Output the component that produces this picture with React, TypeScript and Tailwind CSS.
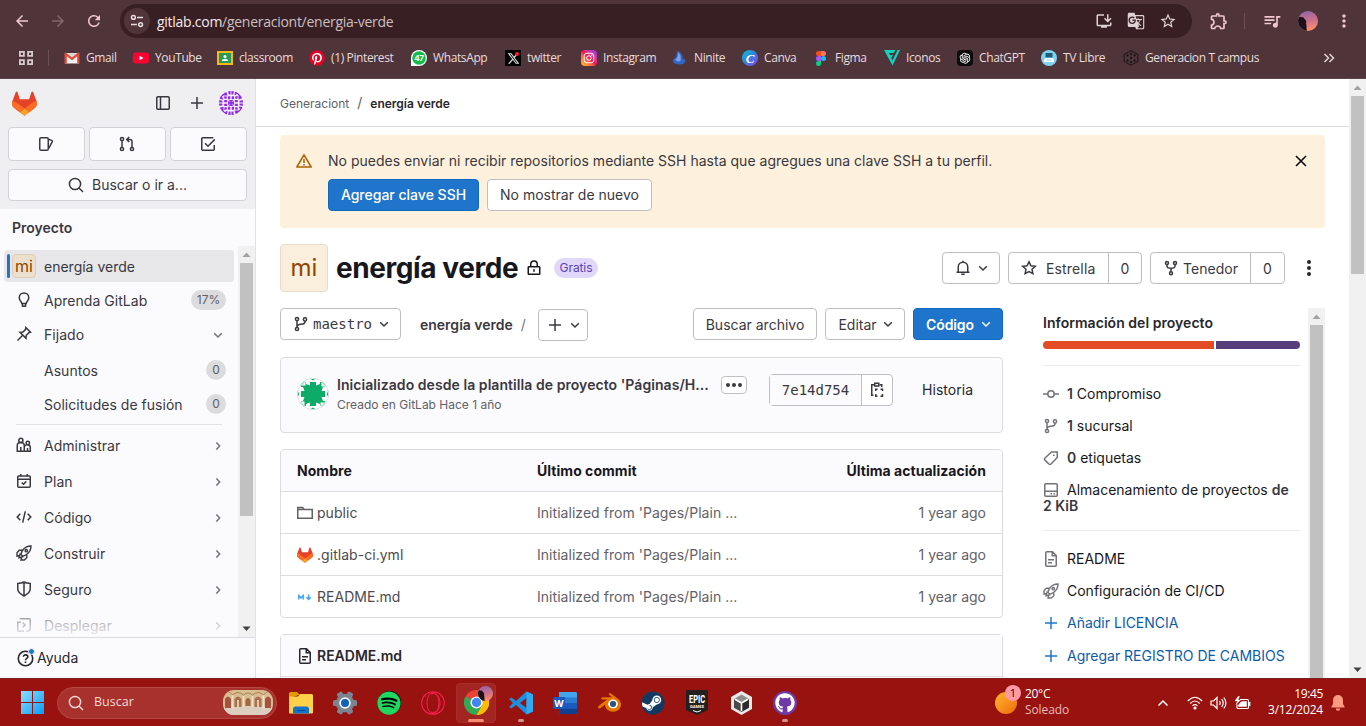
import React from "react";
import {
  MdArrowBack, MdArrowForward, MdRefresh, MdInstallDesktop, MdGTranslate, MdStarBorder,
  MdOutlineExtension, MdQueueMusic, MdMoreVert,
} from "react-icons/md";
import { FaPinterest, FaSpotify, FaSteam, FaGithub, FaXTwitter, FaInstagram } from "react-icons/fa6";
import { AiOutlineOpenAI } from "react-icons/ai";
import { SiBlender } from "react-icons/si";

type P = { className?: string };
type Kids = { children: React.ReactNode };

const I = ({ children, className = "", size = 16, w = 1.5 }: Kids & { className?: string; size?: number; w?: number }) => (
  <svg width={size} height={size} viewBox="0 0 16 16" fill="none" stroke="currentColor" strokeWidth={w} className={`shrink-0 ${className}`}>
    {children}
  </svg>
);

const Tanuki = ({ size = 16 }: { size?: number }) => (
  <svg width={size} height={size} viewBox="0 0 25 24" className="shrink-0">
    <path fill="#E24329" d="m24.507 9.5-.034-.09L21.082.562a.896.896 0 0 0-1.694.091l-2.29 7.01H7.825L5.535.653a.898.898 0 0 0-1.694-.09L.451 9.411.416 9.5a6.297 6.297 0 0 0 2.09 7.278l.012.01.03.022 5.16 3.867 2.56 1.935 1.554 1.176a1.051 1.051 0 0 0 1.268 0l1.555-1.176 2.56-1.935 5.197-3.89.014-.01A6.297 6.297 0 0 0 24.507 9.5Z" />
    <path fill="#FC6D26" d="m24.507 9.5-.034-.09a11.44 11.44 0 0 0-4.56 2.051l-7.447 5.632 4.742 3.584 5.197-3.89.014-.01A6.297 6.297 0 0 0 24.507 9.5Z" />
    <path fill="#FCA326" d="m7.707 20.677 2.56 1.935 1.555 1.176a1.051 1.051 0 0 0 1.268 0l1.555-1.176 2.56-1.935-4.743-3.584-4.755 3.584Z" />
    <path fill="#FC6D26" d="M5.01 11.461a11.43 11.43 0 0 0-4.56-2.05L.416 9.5a6.297 6.297 0 0 0 2.09 7.278l.012.01.03.022 5.16 3.867 4.745-3.584-7.444-5.632Z" />
  </svg>
);

const Chevron = ({ className = "" }: P) => <I className={className}><path d="m4.200 6.300 3.800 3.700 3.800-3.700" /></I>;
const ChevronRight = ({ className = "" }: P) => <I className={className}><path d="m6.300 4.400 3.400 3.600-3.400 3.600" /></I>;
const Plus = ({ className = "" }: P) => <I className={className}><path d="M8 2v12M2 8h12" /></I>;
const Branch = ({ className = "" }: P) => (
  <I className={className}><circle cx="4" cy="3" r="1.600" /><circle cx="4" cy="13" r="1.600" /><circle cx="12" cy="3.400" r="1.600" /><path d="M4 4.600v6.800M12 5v.6c0 1.600-1 2.300-2.400 2.500L6.400 8.600C5 8.900 4 9.600 4 11" /></I>
);
const Fork = ({ className = "" }: P) => (
  <I className={className}><circle cx="4" cy="3" r="1.500" /><circle cx="12" cy="3" r="1.500" /><circle cx="8" cy="13.200" r="1.500" /><path d="M4 4.500V6c0 1.500 1 2.300 4 2.300S12 7.500 12 6V4.500M8 8.200v3.500" /></I>
);
const Rocket = ({ className = "" }: P) => (
  <I className={className} w={1.400}>
    <path d="M15 1c-4 0-6.500 1.500-8.500 4.500-1.300 2-1.500 3-1.500 4l1.500 1.600c1.200 0 2.300-.4 4-1.600C13.500 7.500 15 5 15 1Z" /><circle cx="10.300" cy="5.700" r="1.200" />
    <path d="M6.200 5.200H3.300L1 7.800v3.400l3-.7M10.800 9.800v3L8.200 15H5l.8-3.200M4.300 8.200 3 12.800l4.500-1.200" />
  </I>
);
const Doc = ({ className = "" }: P) => (
  <I className={className}><path d="M2.750 1.750a1 1 0 0 1 1-1H9.500l3.750 3.750v9.750a1 1 0 0 1-1 1h-8.500a1 1 0 0 1-1-1ZM9.250 1v3.750H13M5 8.750h6M5 11.750h4" /></I>
);

const Arrow = ({ up, dim }: { up?: boolean; dim?: boolean }) => (
  <svg width="17" height="17" viewBox="0 0 17 17" className="shrink-0">
    <path d={up ? "M8.500 6.500 12.500 11h-8Z" : "M8.500 11 12.500 6.500h-8Z"} fill={dim ? "#a3a3a3" : "#404040"} />
  </svg>
);

/* ---------- browser ---------- */

const ico = "h-4 w-4 shrink-0";
const bookmarks: { w: string; label: string; icon: React.ReactNode }[] = [
  { w: "w-[69px]", label: "Gmail", icon: <svg viewBox="0 0 16 16" className={ico}><path d="M1 3h14v10.500H1z" fill="#f1f1f1" /><path d="M1 3.500 8 9l7-5.500V3H1z" fill="#d9d9d9" /><path d="M.5 13.500V3.500c0-1 1-1.300 1.800-.6L8 7.500l5.700-4.600c.8-.7 1.800-.4 1.800.6v10h-2.300V6.300L8 10.300 2.800 6.300v7.200z" fill="#dd4b39" /></svg> },
  { w: "w-[84px]", label: "YouTube", icon: <svg viewBox="0 0 16 16" className={ico}><rect y="2.500" width="16" height="11" rx="3" fill="#ff0033" /><path d="m6.500 5.700 4 2.300-4 2.300z" fill="#fff" /></svg> },
  { w: "w-[92px]", label: "classroom", icon: <svg viewBox="0 0 16 16" className={ico}><path d="M0 1h16v14H0z" fill="#f4b917" /><path d="M2 3h12v10H2z" fill="#279a57" /><circle cx="8" cy="6.500" r="1.500" fill="#fff" /><path d="M4.800 11c0-3 6.400-3 6.400 0z" fill="#fff" /></svg> },
  { w: "w-[102px]", label: "(1) Pinterest", icon: <span className="flex h-4 w-4 shrink-0 items-center justify-center"><span className="flex h-[14px] w-[14px] items-center justify-center rounded-full bg-white"><FaPinterest size={16} color="#e60023" className="shrink-0" /></span></span> },
  { w: "w-[94px]", label: "WhatsApp", icon: <svg viewBox="0 0 16 16" className={ico}><path d="M0 16V8A8 8 0 1 1 8 16z" fill="#fff" /><circle cx="8" cy="8" r="6.800" fill="#12bd4e" /><text x="8" y="10.900" fontSize="8" fontWeight="700" fontFamily="Inter, sans-serif" textAnchor="middle" fill="#fff">47</text></svg> },
  { w: "w-[76px]", label: "twitter", icon: <span className="relative flex h-4 w-4 shrink-0 items-center justify-center bg-black"><FaXTwitter size={13} color="#ddd" /><i className="absolute right-0.5 top-0.5 h-1 w-1 rounded-full bg-[#ff1a2c]" /></span> },
  { w: "w-[91px]", label: "Instagram", icon: <span className="flex h-4 w-4 shrink-0 items-center justify-center rounded-[4px] bg-linear-to-tr from-[#ffc800] via-[#f9094d] to-[#a011f5]"><FaInstagram size={12} color="#fff" /></span> },
  { w: "w-[70px]", label: "Ninite", icon: <svg viewBox="0 0 16 16" className={ico}><path d="M2 13c-2-2-1-4 1-5C5 7 4 5 5.500 1c4 1 5.500 4.500 5 8 1.500-1 4 1 2.500 3.500C11.500 15 4 15 2 13Z" fill="#3565c4" /><path d="M6 2.500c3 2 3 5 2.500 8.500C6 12 4 11 3 9.500 6 8.500 5.500 6 6 2.500Z" fill="#76a2ee" /></svg> },
  { w: "w-[71px]", label: "Canva", icon: <span className="flex h-4 w-4 shrink-0 items-center justify-center rounded-full bg-linear-to-br from-[#00c4cc] via-[#2f7fe0] to-[#7d2ae8] font-['Liberation_Serif'] text-[13px] font-bold italic leading-none text-white">C</span> },
  { w: "w-[71px]", label: "Figma", icon: <svg viewBox="0 0 16 16" className={ico}><path d="M8 1H5.500a2.500 2.500 0 0 0 0 5H8z" fill="#f24e1e" /><path d="M8 1h2.500a2.500 2.500 0 0 1 0 5H8z" fill="#ff7262" /><path d="M8 6H5.500a2.500 2.500 0 0 0 0 5H8z" fill="#a259ff" /><circle cx="10.500" cy="8.500" r="2.500" fill="#1abcfe" /><path d="M8 11H5.500A2.500 2.500 0 1 0 8 13.500z" fill="#0acf83" /></svg> },
  { w: "w-[73px]", label: "Iconos", icon: <svg viewBox="0 0 16 16" className={ico}><path d="M0 0h11.500L9.700 3H5l1 2h3L7.300 8 6.500 6.500l2 4L13.500 0H16L8.500 15.500z" fill="#11d3bc" /></svg> },
  { w: "w-[84px]", label: "ChatGPT", icon: <span className="flex h-4 w-4 shrink-0 items-center justify-center rounded-[4px] bg-[#0c0c0c]"><AiOutlineOpenAI size={14} color="#fff" /></span> },
  { w: "w-[82px]", label: "TV Libre", icon: <svg viewBox="0 0 16 16" className={ico}><circle cx="8" cy="8" r="8" fill="#7fd3ee" /><path d="M4.500 3h7v4.500h-7z" fill="#1d5f78" /><path d="M3 9.500 4.500 8h7L13 9.500V12H3z" fill="#fff" /><path d="M5.500 10h5" stroke="#7fd3ee" /></svg> },
  { w: "w-[180px]", label: "Generacion T campus", icon: <svg viewBox="0 0 16 16" className={ico} fill="none" stroke="#21171a" strokeWidth="1.100"><path d="M8 .8 14.800 4.500v7L8 15.200 1.200 11.500v-7Z" /><path d="M4.500 5.500h.1M8 4h.1M11.500 5.500h.1M4.500 10.500h.1M8 12h.1M11.500 10.500h.1M8 8h.1" stroke="#120b0d" strokeWidth="2" strokeLinecap="round" /></svg> },
];

const Browser = () => (
  <header className="flex h-[79px] shrink-0 flex-col border-b border-[#5c4448] bg-[#4f353a] font-['Open_Sans','Noto_Sans',sans-serif] text-[#e9dbdd]">
    <div className="flex h-[42px] items-center pt-0">
      <MdArrowBack size={18} className="ml-[13px] text-[#efc6cf]" />
      <MdArrowForward size={18} className="ml-[18px] text-[#83666c]" />
      <MdRefresh size={18} className="ml-[18px] text-[#efc6cf]" />
      <div className="ml-[17px] flex h-[34px] w-[1072px] items-center rounded-full bg-[#371f23]">
        <span className="ml-1 flex h-[26px] w-[26px] items-center justify-center rounded-full bg-[#4f353a]">
          <I size={16}><circle cx="4.400" cy="4.400" r="1.900" /><path d="M8 4.400h6M2 11.600h6" /><circle cx="11.600" cy="11.600" r="1.900" /></I>
        </span>
        <span className="ml-[7px] text-[14px] tracking-[-0.270px] text-[#cdbfc1]"><span className="text-[#f7e9ec]">gitlab.com</span>/generaciont/energia-verde</span>
        <div className="ml-auto mr-[15px] flex items-center gap-[14px] text-[#e0d2d4]">
          <MdInstallDesktop size={18} /><MdGTranslate size={18} /><MdStarBorder size={18} />
        </div>
      </div>
      <MdOutlineExtension size={20} className="ml-[17px] text-[#efc6cf]" />
      <span className="ml-[15px] h-4 w-px bg-[#6d4f55]" />
      <MdQueueMusic size={20} className="ml-[17px] text-[#efc6cf]" />
      <svg width="20" height="20" viewBox="0 0 20 20" className="ml-[16px]">
        <defs><clipPath id="av"><circle cx="10" cy="10" r="10" /></clipPath><linearGradient id="sky" x2="0.200" y2="1"><stop stopColor="#8b63a9" /><stop offset=".6" stopColor="#d0718c" /><stop offset="1" stopColor="#f98d6c" /></linearGradient></defs>
        <g clipPath="url(#av)"><path d="M0 0h20v20H0z" fill="url(#sky)" /><path d="M0 7c2-2 3-1 4-.5C5 5 6 7 6.500 8c2 1 2 3 1.500 4 1 2 0 5 1 8H0z" fill="#1a1119" /></g>
      </svg>
      <MdMoreVert size={20} className="ml-[16px] text-[#efc6cf]" />
    </div>
    <div className="flex h-8 items-center text-[12px] tracking-[-0.380px]">
      <svg width="16" height="16" viewBox="0 0 16 16" fill="none" stroke="#d9cbcd" strokeWidth="1.800" className="ml-[18px] shrink-0"><path d="M1.900 1.900h4v4h-4zM10.100 1.900h4v4h-4zM1.900 10.100h4v4h-4zM10.100 10.100h4v4h-4z" /></svg>
      <span className="ml-[14px] mr-[15px] h-4 w-px shrink-0 bg-[#6d5055]" />
      {bookmarks.map((b) => (
        <span key={b.label} className={`flex shrink-0 items-center gap-[6px] whitespace-nowrap ${b.w}`}>{b.icon}<span className="pb-px">{b.label}</span></span>
      ))}
      <svg width="12" height="12" viewBox="0 0 12 12" fill="none" stroke="#e0d2d4" strokeWidth="1.500" className="ml-[20px]"><path d="m1.500 2 4 4-4 4M6.500 2l4 4-4 4" /></svg>
    </div>
  </header>
);

/* ---------- sidebar ---------- */

const Row = ({ icon, label, end, mt }: { icon?: React.ReactNode; label: string; end?: React.ReactNode; mt: string }) => (
  <div className={`flex h-8 shrink-0 items-center pl-4 pr-2 ${mt}`}>
    <span className="-mt-0.5 flex w-4">{icon}</span>
    <span className="ml-3 flex-1 pb-0.5 tracking-[0.030px]">{label}</span>
    {end}
  </div>
);
const Count = ({ children, wide }: Kids & { wide?: boolean }) => (
  <span className={`-mt-0.5 flex h-5 items-center justify-center rounded-full bg-[#dcdcde] text-[12px] text-[#626168] ${wide ? "w-[35px]" : "w-5"}`}>{children}</span>
);
const right = <ChevronRight className="text-[#737278]" />;

const PurpleIdenticon = () => (
  <svg width="24" height="24" viewBox="0 0 24 24">
    <defs><clipPath id="pi"><circle cx="12" cy="12" r="12" /></clipPath></defs>
    <g clipPath="url(#pi)" fill="#8e2de2">
      <path d="M0 0h24v24H0z" fill="#f8f2ff" />
      {[0, 1, 2, 3].map((k) => (
        <g key={k} transform={`rotate(${k * 90} 12 12)`}>
          <path d="M3 1.500 7 0l1.500 4.500L4.500 4.500 0 8zM9 0h2.600v3.500H9.800zM12.400 0H15l-.8 3.500h-1.800zM16 0l4 2-4.500 2.500zM5 5.200l2.800.3v2.300H5.500zM9 5.200h2.300v3H9zM12.700 5.200H15v3h-2.300zM9.500 9h5L12 11z" />
        </g>
      ))}
      <path d="M10.300 10.300h3.400v3.400h-3.400z" />
    </g>
  </svg>
);

const topBtn = "flex h-[34px] w-[77px] items-center justify-center rounded-[4px] border border-[#d3d2d8] bg-[#fbfafd] pr-px";

const Sidebar = () => (
  <aside className="flex w-[256px] shrink-0 flex-col border-r border-[#e2e1e6] bg-[#fbfafd] text-[14px] text-[#3a383f]">
    <div className="flex h-[130px] shrink-0 flex-col bg-[#efeff2] px-2">
      <div className="flex h-12 items-center pl-1">
        <Tanuki size={25} />
        <I className="ml-[118px]"><rect x="1.750" y="1.750" width="12.500" height="12.500" rx="1.200" /><path d="M5.500 2v12" /></I>
        <Plus className="ml-[18px]" />
        <span className="ml-[14px]"><PurpleIdenticon /></span>
      </div>
      <div className="flex gap-1">
        <span className={topBtn}><I><rect x="1.750" y="1.750" width="8.500" height="12.500" rx="1.300" /><path d="m10.500 3.300 3.200 1.100a.9.900 0 0 1 .6 1.200L10.700 12.500" /></I></span>
        <span className={topBtn}><I><circle cx="3" cy="3" r="1.600" /><circle cx="3" cy="13" r="1.600" /><circle cx="13" cy="13" r="1.600" /><path d="M3 4.600v6.800M13 11.400V5.500a2 2 0 0 0-2-2H7.800M10.200 1 7.700 3.500 10.200 6" /></I></span>
        <span className={topBtn}><I><path d="M14.250 9v4.250a1 1 0 0 1-1 1H2.750a1 1 0 0 1-1-1V2.750a1 1 0 0 1 1-1h10.500M5 7.200l3 3 6.800-6.800" /></I></span>
      </div>
      <div className="mt-2 flex h-8 items-center justify-center gap-2 rounded-[4px] border border-[#d3d2d8] bg-[#fbfafd]">
        <I><circle cx="7" cy="7" r="5.600" /><path d="m11 11 4 4" /></I><span className="pb-px">Buscar o ir a...</span>
      </div>
    </div>
    <div className="flex h-[38px] shrink-0 items-center pb-0.5 pl-3 font-semibold">Proyecto</div>
    <div className="relative -mt-px flex min-h-0 flex-1">
      <div className="flex w-[234px] flex-col overflow-hidden">
        <div className="ml-1 mt-1 flex h-8 shrink-0 items-center rounded-[4px] bg-[#e7e7ea] pl-[3px]">
          <span className="h-6 w-[3px] rounded bg-[#1f75cb]" />
          <span className="ml-0.5 flex h-6 w-6 items-center justify-center rounded-[4px] border border-[#ddccb8] bg-[#ecdfcd] text-[16px] leading-none text-[#8f4700]">mi</span>
          <span className="ml-2">energía verde</span>
        </div>
        <Row mt="mt-[3px]" label="Aprenda GitLab" end={<Count wide>17%</Count>} icon={<I><path d="M5.750 11.500c0-2-2.500-2.700-2.500-5.750a4.750 4.750 0 0 1 9.500 0c0 3.050-2.500 3.750-2.500 5.750ZM6.500 11.500v2.750h3V11.500" /></I>} />
        <Row mt="mt-[2px]" label="Fijado" end={<Chevron className="text-[#737278]" />} icon={<I><path d="m9.800 1.500 4.700 4.700-1.600.5-2.600 2.600-.3 3-6-6 3-.3 2.600-2.600ZM6.500 9.500l-5 5" /></I>} />
        <Row mt="mt-[4px]" label="Asuntos" end={<Count>0</Count>} />
        <Row mt="mt-[2px]" label="Solicitudes de fusión" end={<Count>0</Count>} />
        <div className="ml-4 mr-3 mt-[3px] h-px shrink-0 bg-[#e3e3e6]" />
        <Row mt="mt-[5px]" label="Administrar" end={right} icon={<I><circle cx="4.800" cy="3.400" r="2.100" /><circle cx="11.800" cy="6" r="1.700" /><path d="M8.250 14.250h-7V8.500c0-4 7-4 7 0zM8.300 9.800c1-3 6-2.500 6 .8v3.650H8.300M4.800 10v4M11.500 11v3" /></I>} />
        <Row mt="mt-1" label="Plan" end={right} icon={<I><rect x="1.750" y="3" width="12.500" height="11.250" rx="1" /><path d="M2 6.250h12M4.750 1v2M11.250 1v2M5.800 9.600l1.700 1.600 2.800-2.800" /></I>} />
        <Row mt="mt-1" label="Código" end={right} icon={<I><path d="M4.300 4.700 1.200 8l3.100 3.300M11.700 4.700 14.800 8l-3.100 3.300M9.300 2.300 6.700 13.700" /></I>} />
        <Row mt="mt-1" label="Construir" end={right} icon={<Rocket />} />
        <Row mt="mt-1" label="Seguro" end={right} icon={<I><path d="M8 1c2 1 4.200 1.400 6.250 1.500V8c0 3-2.500 5-6.250 7C4.250 13 1.750 11 1.750 8V2.500C3.800 2.400 6 2 8 1ZM8 1v14" /></I>} />
        <Row mt="mt-1" label="Desplegar" end={right} icon={<I><path d="M3.750 1.750h9.500a1 1 0 0 1 1 1v8.500a3 3 0 0 1-3 3h-1M1.750 5.500v7.750a1 1 0 0 0 1 1H8M1 5.250h4M6.800 5.800 9 8l-2.200 2.200" /></I>} />
      </div>
      <div className="absolute bottom-0 left-0 h-10 w-[238px] bg-linear-to-b from-[#fbfafd]/10 to-[#fbfafd]/95" />
      <div className="ml-1 flex w-[17px] flex-col items-center bg-[#f1f1f1]">
        <Arrow up dim />
        <div className="h-[253px] w-[13px] bg-[#c1c1c1]" />
        <span className="mt-auto"><Arrow /></span>
      </div>
    </div>
    <div className="flex h-[41px] shrink-0 items-center gap-[3px] border-t border-[#dcdcde] pl-[17px] text-[#28272d]">
      <span className="relative flex"><I size={17}><circle cx="8" cy="8" r="6.800" /><path d="M6 6.400c0-2.500 4.200-2.300 4.200 0C10.200 7.900 8 7.800 8 9.600M8 10.800v1.400" /></I><i className="absolute -right-px -top-0.5 h-[7px] w-[7px] rounded-full border border-[#fbfafd] bg-[#1f75cb]" /></span>
      <span className="pb-0.5">Ayuda</span>
    </div>
  </aside>
);

/* ---------- main ---------- */

const btn = "flex h-8 items-center justify-center rounded-[4px] border border-[#bfbfc3] bg-white text-[14px] text-[#3a383f] whitespace-nowrap";
const mono = "font-['DejaVu_Sans_Mono',monospace]";

const Alert = () => (
  <div className="mt-2 flex h-[93px] rounded-[4px] bg-[#fdf1dd] pl-4 pr-4 pt-4">
    <I className="mt-[2px] text-[#ab6100]"><path d="M8 1.800 15.200 14H.8ZM8 6v4M8 11v1.500" strokeLinejoin="round" /></I>
    <div className="ml-4 flex-1">
      <p className="h-5 text-[14px] leading-5 tracking-[0.015px] text-[#3a383f]">No puedes enviar ni recibir repositorios mediante SSH hasta que agregues una clave SSH a tu perfil.</p>
      <div className="mt-2 flex gap-2">
        <span className="flex h-8 w-[151px] items-center justify-center rounded-[4px] border border-[#1068bf] bg-[#1f75cb] pb-px text-[14px] font-medium text-white">Agregar clave SSH</span>
        <span className={`${btn} w-[165px] pb-px`}>No mostrar de nuevo</span>
      </div>
    </div>
    <I className="mt-[2px]"><path d="m3 3 10 10M13 3 3 13" /></I>
  </div>
);

const TitleRow = () => (
  <div className="mt-4 flex h-12 items-center">
    <span className="flex h-12 w-12 items-center justify-center rounded-[4px] border border-[#e6dccc] bg-[#faeedd] text-[24px] text-[#8f4700]">mi</span>
    <h1 className="ml-2 w-[182px] whitespace-nowrap text-[28px] font-bold tracking-[-0.420px] text-[#18171d]">energía verde</h1>
    <I className="ml-2 text-[#18171d]"><rect x="2.250" y="6.750" width="11.500" height="7.500" rx=".6" /><path d="M4.750 6.500V4.200a3.250 3.250 0 0 1 6.500 0v2.300M8 9.300v2.500" /></I>
    <span className="ml-3 flex h-5 w-11 items-center justify-center rounded-full bg-[#e1d8f9] text-[12px] tracking-[-0.100px] text-[#5943b6]">Gratis</span>
    <span className={`${btn} ml-auto w-[58px] gap-1 pl-1`}><I><path d="M3.250 12.250V7a4.750 4.750 0 0 1 9.500 0v5.250M1.500 12.250h13M8 .8V2.500M6.300 14.200h3.400" /></I><Chevron /></span>
    <div className={`${btn} ml-2 w-[134px] justify-start`}>
      <span className="flex flex-1 items-center pl-3"><I><path d="m8 1.800 1.900 4 4.400.5-3.300 3 .9 4.300L8 11.500l-3.900 2.100.9-4.300-3.300-3 4.400-.5Z" /></I><span className="ml-[9px] tracking-[0.150px]">Estrella</span></span>
      <span className="flex h-full w-[33px] items-center justify-center border-l border-[#bfbfc3]">0</span>
    </div>
    <div className={`${btn} ml-2 w-[135px] justify-start`}>
      <span className="flex flex-1 items-center pl-3"><Fork /><span className="ml-1 tracking-[0.050px]">Tenedor</span></span>
      <span className="flex h-full w-[34px] items-center justify-center border-l border-[#bfbfc3]">0</span>
    </div>
    <svg width="16" height="16" viewBox="0 0 16 16" className="ml-4 mr-2" fill="#28272d"><circle cx="8" cy="2" r="2" /><circle cx="8" cy="8" r="2" /><circle cx="8" cy="14" r="2" /></svg>
  </div>
);

const GreenIdenticon = () => (
  <svg width="32" height="32" viewBox="0 0 32 32" className="shrink-0">
    <defs><clipPath id="gi"><circle cx="16" cy="16" r="15.500" /></clipPath></defs>
    <g clipPath="url(#gi)">
      <path d="M0 0h32v32H0z" fill="#fff" />
      <path d="M8 4h16l4 4v16l-4 4H8l-4-4V8z" fill="#0cac68" />
      {[0, 1, 2, 3].map((k) => (
        <g key={k} transform={`rotate(${k * 90} 16 16)`}>
          <path d="M12 0h8l-4 2.500zM6 0h4L7 4 4 7 0 9V6z" fill="#0cac68" />
          <path d="m9 3 4 1v3.500L9 6zM19 4l4-1v3l-4 1.500zM4.500 7.500l4-4v4z" fill="#fff" />
        </g>
      ))}
      <path d="M8 8h16v16H8z" fill="#0cac68" />
    </g>
    <circle cx="16" cy="16" r="15.500" fill="none" stroke="#e0e4e2" />
  </svg>
);

const files = [
  { n: "public", i: <I className="text-[#626168]"><path d="M.75 13.250V2.500h4.750l2 2h7.750v8.750ZM.75 4.500h6.500" /></I> },
  { n: ".gitlab-ci.yml", i: <Tanuki size={16} /> },
  { n: "README.md", i: <I className="text-[#42a5f5]"><path d="M1.800 10.500v-4l2.200 2.300 2.200-2.300v4M11.600 5.500v4M9.400 8.300l2.200 2.200 2.200-2.200" /></I> },
];

const card = "rounded-[4px] border border-[#dcdcde]";

const Files = () => (
  <section className="flex w-[723px] shrink-0 flex-col">
    <div className="flex h-8">
      <span className={`${btn} w-[121px] pl-1`}><Branch /><span className={`ml-1 mr-1 ${mono}`}>maestro</span><Chevron /></span>
      <span className="ml-[19px] flex items-center text-[14px] font-semibold text-[#3a383f]">energía verde<span className="ml-2 font-normal text-[#737278]">/</span></span>
      <span className={`${btn} ml-auto mr-[105px] mt-px w-[50px] shrink-0 gap-1 pl-[3px]`}><Plus /><Chevron /></span>
      <span className={`${btn} w-[124px] shrink-0`}>Buscar archivo</span>
      <span className={`${btn} ml-2 w-[80px] shrink-0 gap-[3px] pl-1`}>Editar<Chevron /></span>
      <span className="ml-2 flex h-8 w-[90px] shrink-0 items-center justify-center gap-1 rounded-[4px] border border-[#1068bf] bg-[#1f75cb] pl-1 text-[14px] font-semibold text-white"><span className="tracking-[-0.100px]">Código</span><Chevron /></span>
    </div>
    <div className={`${card} mt-[17px] flex h-[76px] shrink-0 bg-[#fbfafd] pl-4`}>
      <span className="mt-5"><GreenIdenticon /></span>
      <div className="ml-2 mt-[17px] w-[373px] whitespace-nowrap">
        <p className="text-[14px] font-semibold leading-5 tracking-[0.060px] text-[#3a383f]">Inicializado desde la plantilla de proyecto 'Páginas/H...</p>
        <p className="text-[12px] leading-5 text-[#626168]">Creado en GitLab Hace 1 año</p>
      </div>
      <span className="ml-[11px] mt-[18px] flex h-[18px] w-[26px] items-center justify-center gap-[2px] rounded-[4px] border border-[#bfbfc3] bg-white">
        <i className="h-1 w-1 rounded-full bg-[#3a383f]" /><i className="h-1 w-1 rounded-full bg-[#3a383f]" /><i className="h-1 w-1 rounded-full bg-[#3a383f]" />
      </span>
      <div className={`${btn} ml-[22px] mt-4 w-[124px]`}>
        <span className={`flex h-full flex-1 items-center justify-center bg-[#fbfafd] ${mono}`}>7e14d754</span>
        <span className="flex h-full w-[31px] items-center justify-center border-l border-[#bfbfc3]"><I><path d="M5 2.750H2.750v10.500H4.500M10.500 2.750h2.250V5" /><path d="M5.750 1.250h4v2.750h-4zM6.750 9V7.250H8.500M11.500 7.250h2V9M13.500 12v2.250H11.500M8.500 14.250H6.750V12" /></I></span>
      </div>
      <span className="ml-[29px] mt-[22px] text-[14px] leading-5 tracking-[0.050px] text-[#28272d]">Historia</span>
    </div>
    <div className={`${card} mt-4 shrink-0 overflow-hidden bg-white text-[14px]`}>
      <div className="flex h-[41px] items-center bg-[#fbfafd] px-4 font-bold tracking-[0.040px] text-[#18171d]">
        <span className="w-[240px]">Nombre</span><span>Último commit</span><span className="ml-auto">Última actualización</span>
      </div>
      {files.map((f) => (
        <div key={f.n} className="flex h-[42px] items-center border-t border-[#dcdcde] px-4 text-[#626168]">
          <span className="flex w-[240px] items-center gap-1 text-[#4c4b51]">{f.i}<span className="tracking-[0.040px]">{f.n}</span></span>
          <span className="tracking-[0.040px]">Initialized from 'Pages/Plain ...</span><span className="ml-auto">1 year ago</span>
        </div>
      ))}
    </div>
    <div className={`${card} mt-4 h-20 shrink-0 bg-white`}>
      <div className="flex h-[42px] items-center gap-1 border-b border-[#dcdcde] bg-[#fbfafd] pl-4 text-[14px] font-semibold text-[#28272d]"><Doc />README.md</div>
    </div>
  </section>
);

const Info = ({ icon, children, blue }: Kids & { icon: React.ReactNode; blue?: boolean }) => (
  <div className={`flex h-8 shrink-0 items-center gap-2 whitespace-nowrap ${blue ? "text-[#0b5cad]" : "text-[#18171d]"}`}>
    <span className={blue ? "text-[#1f75cb]" : "text-[#737278]"}>{icon}</span><span className="pb-0.5">{children}</span>
  </div>
);

const ProjectInfo = () => (
  <section className="ml-10 flex w-[257px] shrink-0 flex-col text-[14px]">
    <h2 className="h-[30px] pt-[5px] font-semibold leading-5 tracking-[0.040px] text-[#28272d]">Información del proyecto</h2>
    <div className="mt-[3px] flex h-2 shrink-0 gap-0.5 overflow-hidden rounded-full"><span className="w-[171px] bg-[#e34c26]" /><span className="flex-1 bg-[#563d7c]" /></div>
    <div className="mb-3 mt-4 h-px shrink-0 bg-[#ececef]" />
    <Info icon={<I><circle cx="8" cy="8" r="3.200" /><path d="M0 8h4.800M11.200 8H16" /></I>}><b className="font-semibold text-[#3a383f]">1</b> Compromiso</Info>
    <Info icon={<Branch />}><b className="font-semibold text-[#3a383f]">1</b> sucursal</Info>
    <Info icon={<I><path d="M8.500 2h5.750v5.500L8 14a1.500 1.500 0 0 1-2.100 0L2 10.100A1.500 1.500 0 0 1 2 8Z" /><path d="M10.800 4.600v1.500" /></I>}><b className="font-semibold text-[#3a383f]">0</b> etiquetas</Info>
    <Info icon={<I><rect x="1.750" y="1.750" width="12.500" height="12.500" rx="1" /><path d="M2 9.250h12M7.500 11.800H9M10.500 11.800H12" /></I>}>Almacenamiento de proyectos <b className="font-semibold text-[#3a383f]">de</b></Info>
    <p className="-mt-2 h-4 font-semibold leading-4 text-[#3a383f]">2 KiB</p>
    <div className="mb-3 mt-4 h-px shrink-0 bg-[#ececef]" />
    <Info icon={<Doc />}>README</Info>
    <Info icon={<Rocket />}>Configuración de CI/CD</Info>
    <Info icon={<Plus />} blue>Añadir LICENCIA</Info>
    <div className="h-px shrink-0" />
    <Info icon={<Plus />} blue>Agregar REGISTRO DE CAMBIOS</Info>
  </section>
);

const Main = () => (
  <main className="flex w-[1093px] shrink-0 flex-col overflow-hidden">
    <div className="flex h-12 shrink-0 items-center border-b border-[#dcdcde] pl-6 pt-0.5 text-[12px] text-[#626168]">
      Generaciont<span className="mx-2 pb-0.5 text-[14px]">/</span><span className="font-semibold text-[#28272d]">energía verde</span>
    </div>
    <div className="flex min-h-0 flex-1 flex-col pl-6 pr-6">
      <Alert />
      <TitleRow />
      <div className="mt-4 flex min-h-0 flex-1 overflow-hidden">
        <Files />
        <ProjectInfo />
        <div className="ml-2 flex w-[17px] shrink-0 flex-col items-center bg-[#f1f1f1]"><Arrow up dim /><div className="w-[13px] flex-1 bg-[#c1c1c1]" /></div>
      </div>
    </div>
  </main>
);

/* ---------- taskbar ---------- */

const Slot = ({ children, mark }: Kids & { mark?: boolean }) => (
  <span className="relative flex h-10 w-[44px] shrink-0 items-center justify-center">{children}{mark && <i className="absolute bottom-px h-[3px] w-[6px] rounded-full bg-[#cf9492]" />}</span>
);

const Taskbar = () => (
  <footer className="flex h-12 shrink-0 items-center border-t border-[#7d211c] bg-[#98120f] font-['Open_Sans','Noto_Sans',sans-serif] text-[12px] text-white">
    <svg width="23" height="23" viewBox="0 0 23 23" className="ml-[21px]"><defs><linearGradient id="wn" x2="1" y2="1"><stop stopColor="#8be0ff" /><stop offset="1" stopColor="#0a9bf5" /></linearGradient></defs><path d="M0 0h11v11H0zM12 0h11v11H12zM0 12h11v11H0zM12 12h11v11H12z" fill="url(#wn)" /></svg>
    <div className="ml-[13px] flex h-8 w-[220px] items-center rounded-full border border-[#b54743] bg-[#a8312e] pl-[10px] pr-[3px] text-[#f3d8d7]">
      <I className="text-[#efd5d4]"><circle cx="7" cy="7" r="5.600" /><path d="m11 11 4 4" /></I>
      <span className="ml-[10px] text-[12.500px]">Buscar</span>
      <svg width="50" height="25" viewBox="0 0 50 25" className="ml-auto">
        <defs><clipPath id="pl"><rect width="50" height="25" rx="11" /></clipPath></defs>
        <g clipPath="url(#pl)">
          <path d="M0 0h50v25H0z" fill="#d9bd90" /><path d="M0 18l8-2h34l8 2v7H0z" fill="#dccdbf" />
          <path d="M2 18V9q3-5 6 0v9zM42 18V9q3-5 6 0v9z" fill="#a3533f" /><path d="M11.500 17V9q3.500-5 7 0v8zM31.500 17V9q3.500-5 7 0v8z" fill="#a86f52" />
          <path d="M22.500 16v-6q2.500-4 5 0v6z" fill="#9c6848" />
          <path d="M9.500 5v14M20.500 6v11M29.500 6v11M40.500 5v14M15 10v7M35 10v7" stroke="#f3e2bd" strokeWidth="1.600" /><path d="M0 3q5-4 9.500 2 5.500-5 11 0 4.500-4 9 0 5.500-5 11 0Q45-1 50 3" stroke="#a5835a" fill="none" />
        </g>
      </svg>
    </div>
    <div className="ml-[2px] flex">
      <Slot><svg width="24" height="22" viewBox="0 0 24 22"><path d="M0 1.500Q0 0 1.500 0H8l3 3h-1L0 6z" fill="#e19a00" /><path d="M0 4.500h9L11 2h11.500q1.500 0 1.500 1.500V20.500q0 1-1 1H1q-1 0-1-1z" fill="#ffd14a" /><path d="M4 21.500V17q0-2.500 2.500-2.500h11Q20 14.500 20 17v4.500z" fill="#1273c9" /><path d="M8 18.500h8" stroke="#0a4d8f" /></svg></Slot>
      <Slot><svg width="24" height="24" viewBox="0 0 24 24"><g fill="#7a8591">{[0, 1, 2].map((k) => <rect key={k} x="9" y="0" width="6" height="24" rx="1.500" transform={`rotate(${30 + k * 60} 12 12)`} />)}<circle cx="12" cy="12" r="9.200" /></g><circle cx="12" cy="12" r="5.800" fill="#f4f6f8" /><circle cx="12" cy="12" r="4" fill="#0f62b5" /></svg></Slot>
      <Slot><span className="flex h-[23px] w-[23px] items-center justify-center rounded-full bg-black"><FaSpotify size={24} color="#1ed760" className="shrink-0" /></span></Slot>
      <Slot><svg width="24" height="24" viewBox="0 0 24 24" fill="none" stroke="#fa1e4e"><circle cx="12" cy="12" r="11.300" strokeWidth="1.100" /><ellipse cx="12" cy="12" rx="6" ry="10.800" /><path d="M10 3c5-2 9 3 9 9s-4 11-9 9" /></svg></Slot>
      <span className="relative ml-px flex h-10 w-10 items-center justify-center rounded-[4px] border border-[#a82e2b] bg-[#a22522]">
        <svg width="25" height="25" viewBox="0 0 24 24"><path d="M12 12 1.600 6A12 12 0 0 1 22.400 6Z" fill="#ea4335" /><path d="M12 12 1.600 6A12 12 0 0 0 12 24Z" fill="#34a853" /><path d="M12 12 22.400 6A12 12 0 0 1 12 24l5-9z" fill="#fbbc05" /><path d="m12 24 5.200-9H6.800z" fill="#34a853" /><path d="M12 24 17.200 15 22.400 6A12 12 0 0 1 12 24" fill="#fbbc05" /><circle cx="12" cy="12" r="5.800" fill="#fff" /><circle cx="12" cy="12" r="4.500" fill="#4285f4" /></svg>
        <svg width="15" height="15" viewBox="0 0 20 20" className="absolute right-[2px] top-[2px]"><g clipPath="url(#av)"><path d="M0 0h20v20H0z" fill="url(#sky)" /><path d="M0 7c2-2 3-1 4-.5C5 5 6 7 6.500 8c2 1 2 3 1.500 4 1 2 0 5 1 8H0z" fill="#1a1119" /></g></svg>
        <i className="absolute bottom-0 h-[3px] w-4 rounded-full bg-[#f78a75]" />
      </span>
      <span className="w-[3px]" />
      <Slot mark><svg width="24" height="24" viewBox="0 0 24 24"><path d="M17.500.5 24 3.500v17l-6.500 3L7 14l-4.500 3.500L0 16l4-4-4-4 2.500-1.500L7 10ZM17.500 7 11 12l6.500 5z" fill="#1c8fe0" fillRule="evenodd" /><path d="m17.500.5 6.500 3v17l-6.500 3z" fill="#35a8f2" /></svg></Slot>
      <Slot><svg width="24" height="22" viewBox="0 0 24 22"><rect x="6" width="18" height="22" rx="1.500" fill="#2b7cd3" /><path d="M6 0h16.500Q24 0 24 1.500V5.500H6z" fill="#41a5ee" /><path d="M6 11h18v5.500H6z" fill="#185abd" /><path d="M6 16.500h18v4Q24 22 22.500 22h-15Q6 22 6 20.500z" fill="#103f91" /><rect y="5" width="12" height="12" rx="1" fill="#185abd" /><text x="6" y="14.500" fontSize="9.500" fontWeight="700" fontFamily="Inter, sans-serif" textAnchor="middle" fill="#fff">W</text></svg></Slot>
      <Slot><span className="relative flex"><i className="absolute left-[9px] top-[7px] h-3 w-3 rounded-full bg-white" /><SiBlender size={23} color="#ea7600" className="relative" /><i className="absolute left-[12px] top-[10px] h-[6px] w-[6px] rounded-full bg-[#265787]" /></span></Slot>
      <Slot><span className="flex h-[22px] w-[22px] items-center justify-center rounded-full bg-white"><FaSteam size={24} color="#12395f" className="shrink-0" /></span></Slot>
      <Slot><svg width="22" height="25" viewBox="0 0 22 25" className="overflow-visible"><path d="M0 1.500Q0 0 1.500 0h19Q22 0 22 1.500V20l-11 5L0 20z" fill="#23201f" /><text x="11" y="12.500" fontSize="10" fontWeight="800" textLength="16" lengthAdjust="spacingAndGlyphs" fontFamily="Roboto, sans-serif" textAnchor="middle" fill="#fff">EPIC</text><text x="11" y="17.500" fontSize="4" fontWeight="700" textLength="14" fontFamily="Roboto, sans-serif" textAnchor="middle" fill="#fff">GAMES</text><path d="m7 20.500 4 1.500 4-1.500" stroke="#fff" fill="none" /></svg></Slot>
      <Slot><svg width="21" height="24" viewBox="0 0 21 24"><path d="M10.500 0 21 6v12l-10.500 6L0 18V6z" fill="#e9e9e9" /><path d="M10.500 12v9L3 16.700V8z" fill="#4a4a4a" /><path d="M10.500 12v9l7.500-4.300V8z" fill="#2a2a2a" /><path d="M10.500 3.500 18 8l-7.500 4L3 8z" fill="#8e8e8e" /><path d="M10.500 12 4 8.300M10.500 12 17 8.300M10.500 12v8" stroke="#fff" strokeWidth="1.600" /></svg></Slot>
      <Slot mark><span className="flex h-6 w-6 items-center justify-center rounded-full bg-[#6e3aa8]"><FaGithub size={20} color="#fff" /></span></Slot>
    </div>
    <div className="ml-[188px] flex items-center">
      <span className="relative h-[22px] w-[22px] rounded-full bg-linear-to-br from-[#ffb52e] to-[#ee6a09]"><i className="absolute -right-[4px] -top-[7px] flex h-4 w-4 items-center justify-center rounded-full bg-[#ff99a4] text-[11px] not-italic leading-none text-[#330000]">1</i></span>
      <div className="ml-2 pb-px leading-4"><p className="tracking-[-0.300px]">20°C</p><p className="tracking-[-0.100px] text-[#e6b9b8]">Soleado</p></div>
    </div>
    <div className="ml-auto flex items-center pr-[20px]">
      <svg width="12" height="8" viewBox="0 0 12 8" fill="none" stroke="#fff" strokeWidth="1.500"><path d="m1.500 6.500 4.500-4.500 4.500 4.500" /></svg>
      <svg width="16" height="14" viewBox="0 0 16 14" fill="none" stroke="#fff" strokeWidth="1.200" className="ml-[18px]"><path d="M.8 5q7.200-7.500 14.400 0M3.200 7.500q4.800-5 9.600 0M5.500 9.900q2.500-2.400 5 0" /><circle cx="8" cy="12" r="1" fill="#fff" /></svg>
      <svg width="17" height="14" viewBox="0 0 17 14" fill="none" stroke="#fff" strokeWidth="1.200" className="ml-[7px]"><path d="M1 5h2.500L7 1.500v11L3.500 9H1ZM9.500 5q1.500 2 0 4M11.700 3.200q3 3.800 0 7.600M13.800 1.500q4.200 5.500 0 11" /></svg>
      <svg width="17" height="14" viewBox="0 0 17 14" fill="none" stroke="#fff" strokeWidth="1.200" className="ml-[7px]"><path d="M6 3.500h7.500q1 0 1 1v7q0 1-1 1H4q-1 0-1-1V8.500M15.800 6v4" /><path d="M6.500 6.500 8 5.500h4.500v5h-8V9z" fill="#fff" strokeWidth=".5" /><path d="M4 .5 1 5h2.500L2 8.500 6.500 4H4L5.500.5z" fill="#fff" strokeWidth=".4" /></svg>
      <div className="ml-[12px] w-[60px] pb-px text-right leading-4 tracking-[-0.200px]"><p className="tracking-[-0.350px]">19:45</p><p>3/12/2024</p></div>
      <svg width="16" height="17" viewBox="0 0 16 17" className="ml-[7px]" fill="#ff9a82"><path d="M8 1a5 5 0 0 1 5 5v4l1.500 2.500v1h-13v-1L3 10V6a5 5 0 0 1 5-5ZM5.800 14.500h4.400a2.200 2.200 0 0 1-4.400 0z" /></svg>
    </div>
  </footer>
);

export default function App() {
  return (
    <div className="flex h-[726px] w-[1366px] flex-col overflow-hidden bg-white font-['Inter',sans-serif]">
      <Browser />
      <div className="flex h-[599px] shrink-0">
        <Sidebar />
        <Main />
        <div className="flex w-[17px] shrink-0 flex-col items-center bg-[#f1f1f1]">
          <Arrow up dim />
          <div className="h-[178px] w-[13px] bg-[#c1c1c1]" />
          <span className="mt-auto"><Arrow /></span>
        </div>
      </div>
      <Taskbar />
    </div>
  );
}
